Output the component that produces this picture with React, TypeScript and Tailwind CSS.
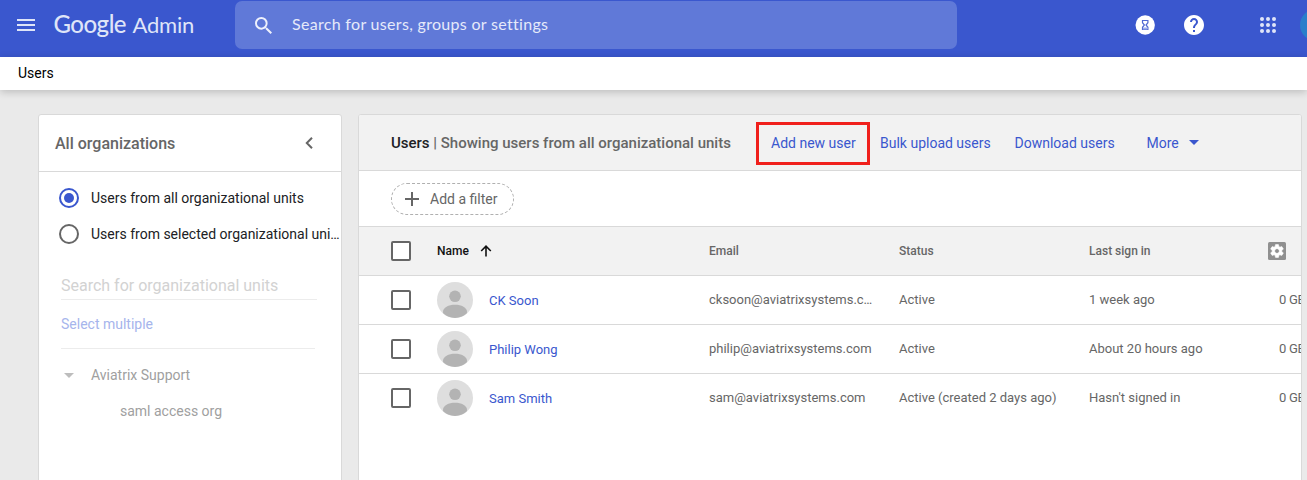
import React from "react";

const users = [
  { name: "CK Soon", email: "cksoon@aviatrixsystems.c…", status: "Active", last: "1 week ago" },
  { name: "Philip Wong", email: "philip@aviatrixsystems.com", status: "Active", last: "About 20 hours ago" },
  { name: "Sam Smith", email: "sam@aviatrixsystems.com", status: "Active (created 2 days ago)", last: "Hasn't signed in" },
];

function Checkbox() {
  return <span className="block h-5 w-5 shrink-0 rounded-[2px] border-2 border-[#666] bg-white" />;
}

function Avatar() {
  return (
    <svg viewBox="0 0 36 36" className="h-9 w-9 shrink-0">
      <circle cx="18" cy="18" r="18" fill="#dedede" />
      <circle cx="18" cy="14.3" r="5.8" fill="#b3b3b3" />
      <path d="M6 30c0-4.600 5.500-7.200 12-7.200s12 2.600 12 7.200c0 .7-.2 1.200-.5 1.600A18 18 0 0 1 18 36a18 18 0 0 1-11.500-4.400C6.200 31.200 6 30.700 6 30z" fill="#b3b3b3" />
    </svg>
  );
}

function Header() {
  return (
    <header className="flex h-[57px] shrink-0 items-start bg-[#3a57ce] text-[#e4e9fa]">
      <svg viewBox="0 0 18 12" className="mt-[19px] ml-[17px] h-3 w-[18px] shrink-0" fill="#dfe5f8" shapeRendering="crispEdges">
        <path d="M0 0h18v2H0zM0 5h18v2H0zM0 10h18v2H0z" />
      </svg>
      <div className="mt-[8px] ml-[18.500px] flex w-[181.500px] shrink-0 items-baseline whitespace-nowrap font-['Lato'] text-2xl leading-8 text-[#dfe5f8]">
        <span className="w-[79px] font-medium tracking-[-0.5px]">Google</span>
        <span className="text-[22px] font-normal tracking-[-0.2px]">Admin</span>
      </div>
      <div className="mt-px flex h-12 w-[722px] shrink-0 items-center rounded-[7px] bg-[#6079d8]">
        <svg viewBox="3 3 17.490 17.490" className="ml-5 h-[17px] w-[17px]" fill="#eef1fc">
          <path d="M15.500 14h-.79l-.28-.27A6.471 6.471 0 0 0 16 9.500 6.500 6.500 0 1 0 9.500 16c1.610 0 3.090-.59 4.230-1.570l.27.28v.79l5 4.990L20.490 19l-4.990-5zm-6 0C7.010 14 5 11.990 5 9.500S7.010 5 9.500 5 14 7.010 14 9.500 11.990 14 9.500 14z" />
        </svg>
        <span className="ml-[20px] -mt-[2px] font-['Lato'] text-base tracking-[0.31px] text-[#e6eafa]">Search for users, groups or settings</span>
      </div>
      <svg viewBox="0 0 20 20" className="mt-[15px] ml-[178px] h-5 w-5 shrink-0">
        <circle cx="10.200" cy="10" r="9.700" fill="#fff" />
        <path d="M7.500 5.500h5.400v2.200L11 10l1.900 2.300v2.200H7.500v-2.200L9.400 10 7.500 7.700z" fill="none" stroke="#5069d2" strokeWidth="1.200" />
        <path d="M8 12.500h4.400v2H8z" fill="#9bacea" />
      </svg>
      <svg viewBox="2 2 20 20" className="mt-[15px] ml-[29px] h-5 w-5 shrink-0" fill="#fff">
        <path d="M12 2C6.480 2 2 6.480 2 12s4.480 10 10 10 10-4.480 10-10S17.520 2 12 2zm1 17h-2v-2h2v2zm2.070-7.750l-.9.920C13.450 12.900 13 13.500 13 15h-2v-.5c0-1.100.45-2.100 1.170-2.830l1.240-1.260c.37-.36.59-.86.59-1.410 0-1.100-.9-2-2-2s-2 .9-2 2H8c0-2.210 1.790-4 4-4s4 1.790 4 4c0 .88-.36 1.680-.93 2.250z" />
      </svg>
      <svg viewBox="0 0 16 16" className="mt-[17px] ml-[56px] h-4 w-4 shrink-0" fill="#dfe5f8">
        {[2, 8, 14].map((y) => [2, 8, 14].map((x) => <circle key={`${x}-${y}`} cx={x} cy={y} r="2" />))}
      </svg>
      <div className="mt-[9px] ml-[24px] h-8 w-8 shrink-0 rounded-full bg-[#2a7ecb]" />
    </header>
  );
}

function Sidebar() {
  return (
    <aside className="h-[380px] w-[304px] shrink-0 rounded-t-[3px] border border-[#d9d9d9] bg-white">
      <div className="flex h-[57px] items-center justify-between border-b border-[#d9d9d9] pr-[28px] pl-4">
        <h2 className="mt-[2px] text-base font-medium text-[#666]">All organizations</h2>
        <svg viewBox="0 0 8 12" className="h-3 w-2" fill="none" stroke="#666" strokeWidth="2">
          <path d="M7 .8L1.800 6 7 11.200" />
        </svg>
      </div>
      <div className="pt-2 pl-5 text-sm text-[#202124]">
        <div className="flex h-9 items-center">
          <span className="flex h-5 w-5 items-center justify-center rounded-full border-2 border-[#3a57ce]">
            <span className="h-[10px] w-[10px] rounded-full bg-[#3a57ce]" />
          </span>
          <span className="ml-3">Users from all organizational units</span>
        </div>
        <div className="flex h-9 items-center">
          <span className="h-5 w-5 shrink-0 rounded-full border-2 border-[#666]" />
          <span className="ml-3 whitespace-nowrap">Users from selected organizational uni…</span>
        </div>
      </div>
      <div className="ml-[22px] pt-[20px]">
        <div className="h-[28px] w-[256px] border-b border-[#ececec] text-base leading-[28px] text-[#d2d2d2]">
          Search for organizational units
        </div>
        <div className="h-[49px] w-[254px] border-b border-[#ececec] text-sm leading-[48px] text-[#a6b5ec]">Select multiple</div>
      </div>
      <div className="pt-2 text-sm text-[#a0a0a0]">
        <div className="flex h-9 items-center">
          <span className="mt-px ml-[25px] h-0 w-0 border-x-[5px] border-t-[5px] border-x-transparent border-t-[#bdbdbd]" />
          <span className="ml-[17px]">Aviatrix Support</span>
        </div>
        <div className="flex h-9 items-center pl-[81px]">saml access org</div>
      </div>
    </aside>
  );
}

function Toolbar() {
  return (
    <div className="flex h-14 items-center whitespace-nowrap border-b border-[#d9d9d9] bg-[#f2f2f2] text-sm text-[#3a57ce]">
      <h1 className="mt-[3px] ml-8 w-[365px] shrink-0 text-[15px] font-medium text-[#666]">
        <span className="text-[#202124]">Users</span> | Showing users from all organizational units
      </h1>
      <a className="mt-[2px] flex h-[43px] w-[114px] shrink-0 items-center border-3 border-[#f0201c] pb-[2px] pl-[12px]">Add new user</a>
      <a className="ml-[10px] w-[134.500px] shrink-0">Bulk upload users</a>
      <a className="w-[132px] shrink-0">Download users</a>
      <a className="w-[42.500px] shrink-0">More</a>
      <span className="h-0 w-0 border-x-[5px] border-t-[5px] border-x-transparent border-t-[#3a57ce]" />
    </div>
  );
}

function UsersPanel() {
  return (
    <section className="h-[380px] w-[944px] shrink-0 overflow-hidden rounded-t-[3px] border border-[#d9d9d9] bg-white">
      <Toolbar />
      <div className="flex h-14 items-center border-b border-[#d9d9d9] pl-8">
        <button className="flex h-8 w-[123px] items-center rounded-full border border-dashed border-[#b0b0b0] text-sm text-[#666]">
          <svg viewBox="0 0 14 14" className="ml-[13px] h-[14px] w-[14px]" fill="#666" shapeRendering="crispEdges">
            <path d="M6 0h2v6h6v2H8v6H6V8H0V6h6z" />
          </svg>
          <span className="ml-[11px]">Add a filter</span>
        </button>
      </div>
      <div className="flex h-[49px] items-center whitespace-nowrap border-b border-[#d9d9d9] bg-[#f2f2f2] pl-8 text-xs font-medium text-[#666]">
        <Checkbox />
        <div className="ml-[26px] flex w-[272px] shrink-0 items-center text-[#111]">
          <span>Name</span>
          <svg viewBox="0 0 12 12" className="ml-[11px] h-3 w-3" fill="none" stroke="#111" strokeWidth="1.600">
            <path d="M6 11.500V1.500M1.200 6L6 1.200 10.800 6" />
          </svg>
        </div>
        <span className="w-[190px] shrink-0">Email</span>
        <span className="w-[190px] shrink-0">Status</span>
        <span className="w-[179px] shrink-0">Last sign in</span>
        <svg viewBox="0 0 18 18" className="h-[18px] w-[18px] shrink-0">
          <rect width="18" height="18" rx="1.500" fill="#909090" />
          <g transform="translate(1.200 1.200) scale(.65)">
            <path fill="#fff" stroke="#fff" strokeWidth=".8" d="M19.430 12.980c.04-.32.07-.64.07-.98s-.03-.66-.07-.98l2.110-1.650c.19-.15.24-.42.12-.64l-2-3.460c-.12-.22-.39-.3-.61-.22l-2.490 1c-.52-.4-1.080-.73-1.690-.98l-.38-2.650C14.460 2.180 14.250 2 14 2h-4c-.25 0-.46.18-.49.42l-.38 2.650c-.61.25-1.170.59-1.690.98l-2.490-1c-.23-.09-.49 0-.61.22l-2 3.460c-.13.22-.07.49.12.64l2.110 1.650c-.04.32-.07.65-.07.98s.03.66.07.98l-2.110 1.650c-.19.15-.24.42-.12.64l2 3.460c.12.22.39.3.61.22l2.490-1c.52.4 1.080.73 1.690.98l.38 2.650c.03.24.24.42.49.42h4c.25 0 .46-.18.49-.42l.38-2.650c.61-.25 1.170-.59 1.690-.98l2.490 1c.23.09.49 0 .61-.22l2-3.460c.12-.22.07-.49-.12-.64l-2.110-1.650zM12 15.500c-1.930 0-3.500-1.570-3.500-3.500s1.570-3.500 3.500-3.500 3.500 1.570 3.500 3.500-1.570 3.500-3.500 3.500z" />
          </g>
        </svg>
      </div>
      {users.map((u) => (
        <div key={u.name} className="flex h-[49px] items-center whitespace-nowrap border-b border-[#d9d9d9] pl-8 text-[13px] text-[#666] last:border-transparent">
          <Checkbox />
          <div className="ml-[26px] flex w-[272px] shrink-0 items-center">
            <Avatar />
            <a className="mt-px ml-4 text-[13px] text-[#3a57ce]">{u.name}</a>
          </div>
          <span className="w-[190px] shrink-0">{u.email}</span>
          <span className="w-[190px] shrink-0">{u.status}</span>
          <span className="w-[190px] shrink-0">{u.last}</span>
          <span className="shrink-0 tracking-[-0.3px]">0 GB</span>
        </div>
      ))}
    </section>
  );
}

export default function App() {
  return (
    <div className="flex h-[480px] w-[1307px] flex-col overflow-hidden bg-[#eaeaea] font-['Roboto',sans-serif]">
      <Header />
      <div className="flex h-[33px] shrink-0 items-center bg-white pb-[2px] pl-[18px] text-sm text-black shadow-[0_2px_8px_rgba(0,0,0,0.2)]">Users</div>
      <main className="flex gap-4 pt-6 pl-[38px]">
        <Sidebar />
        <UsersPanel />
      </main>
    </div>
  );
}
